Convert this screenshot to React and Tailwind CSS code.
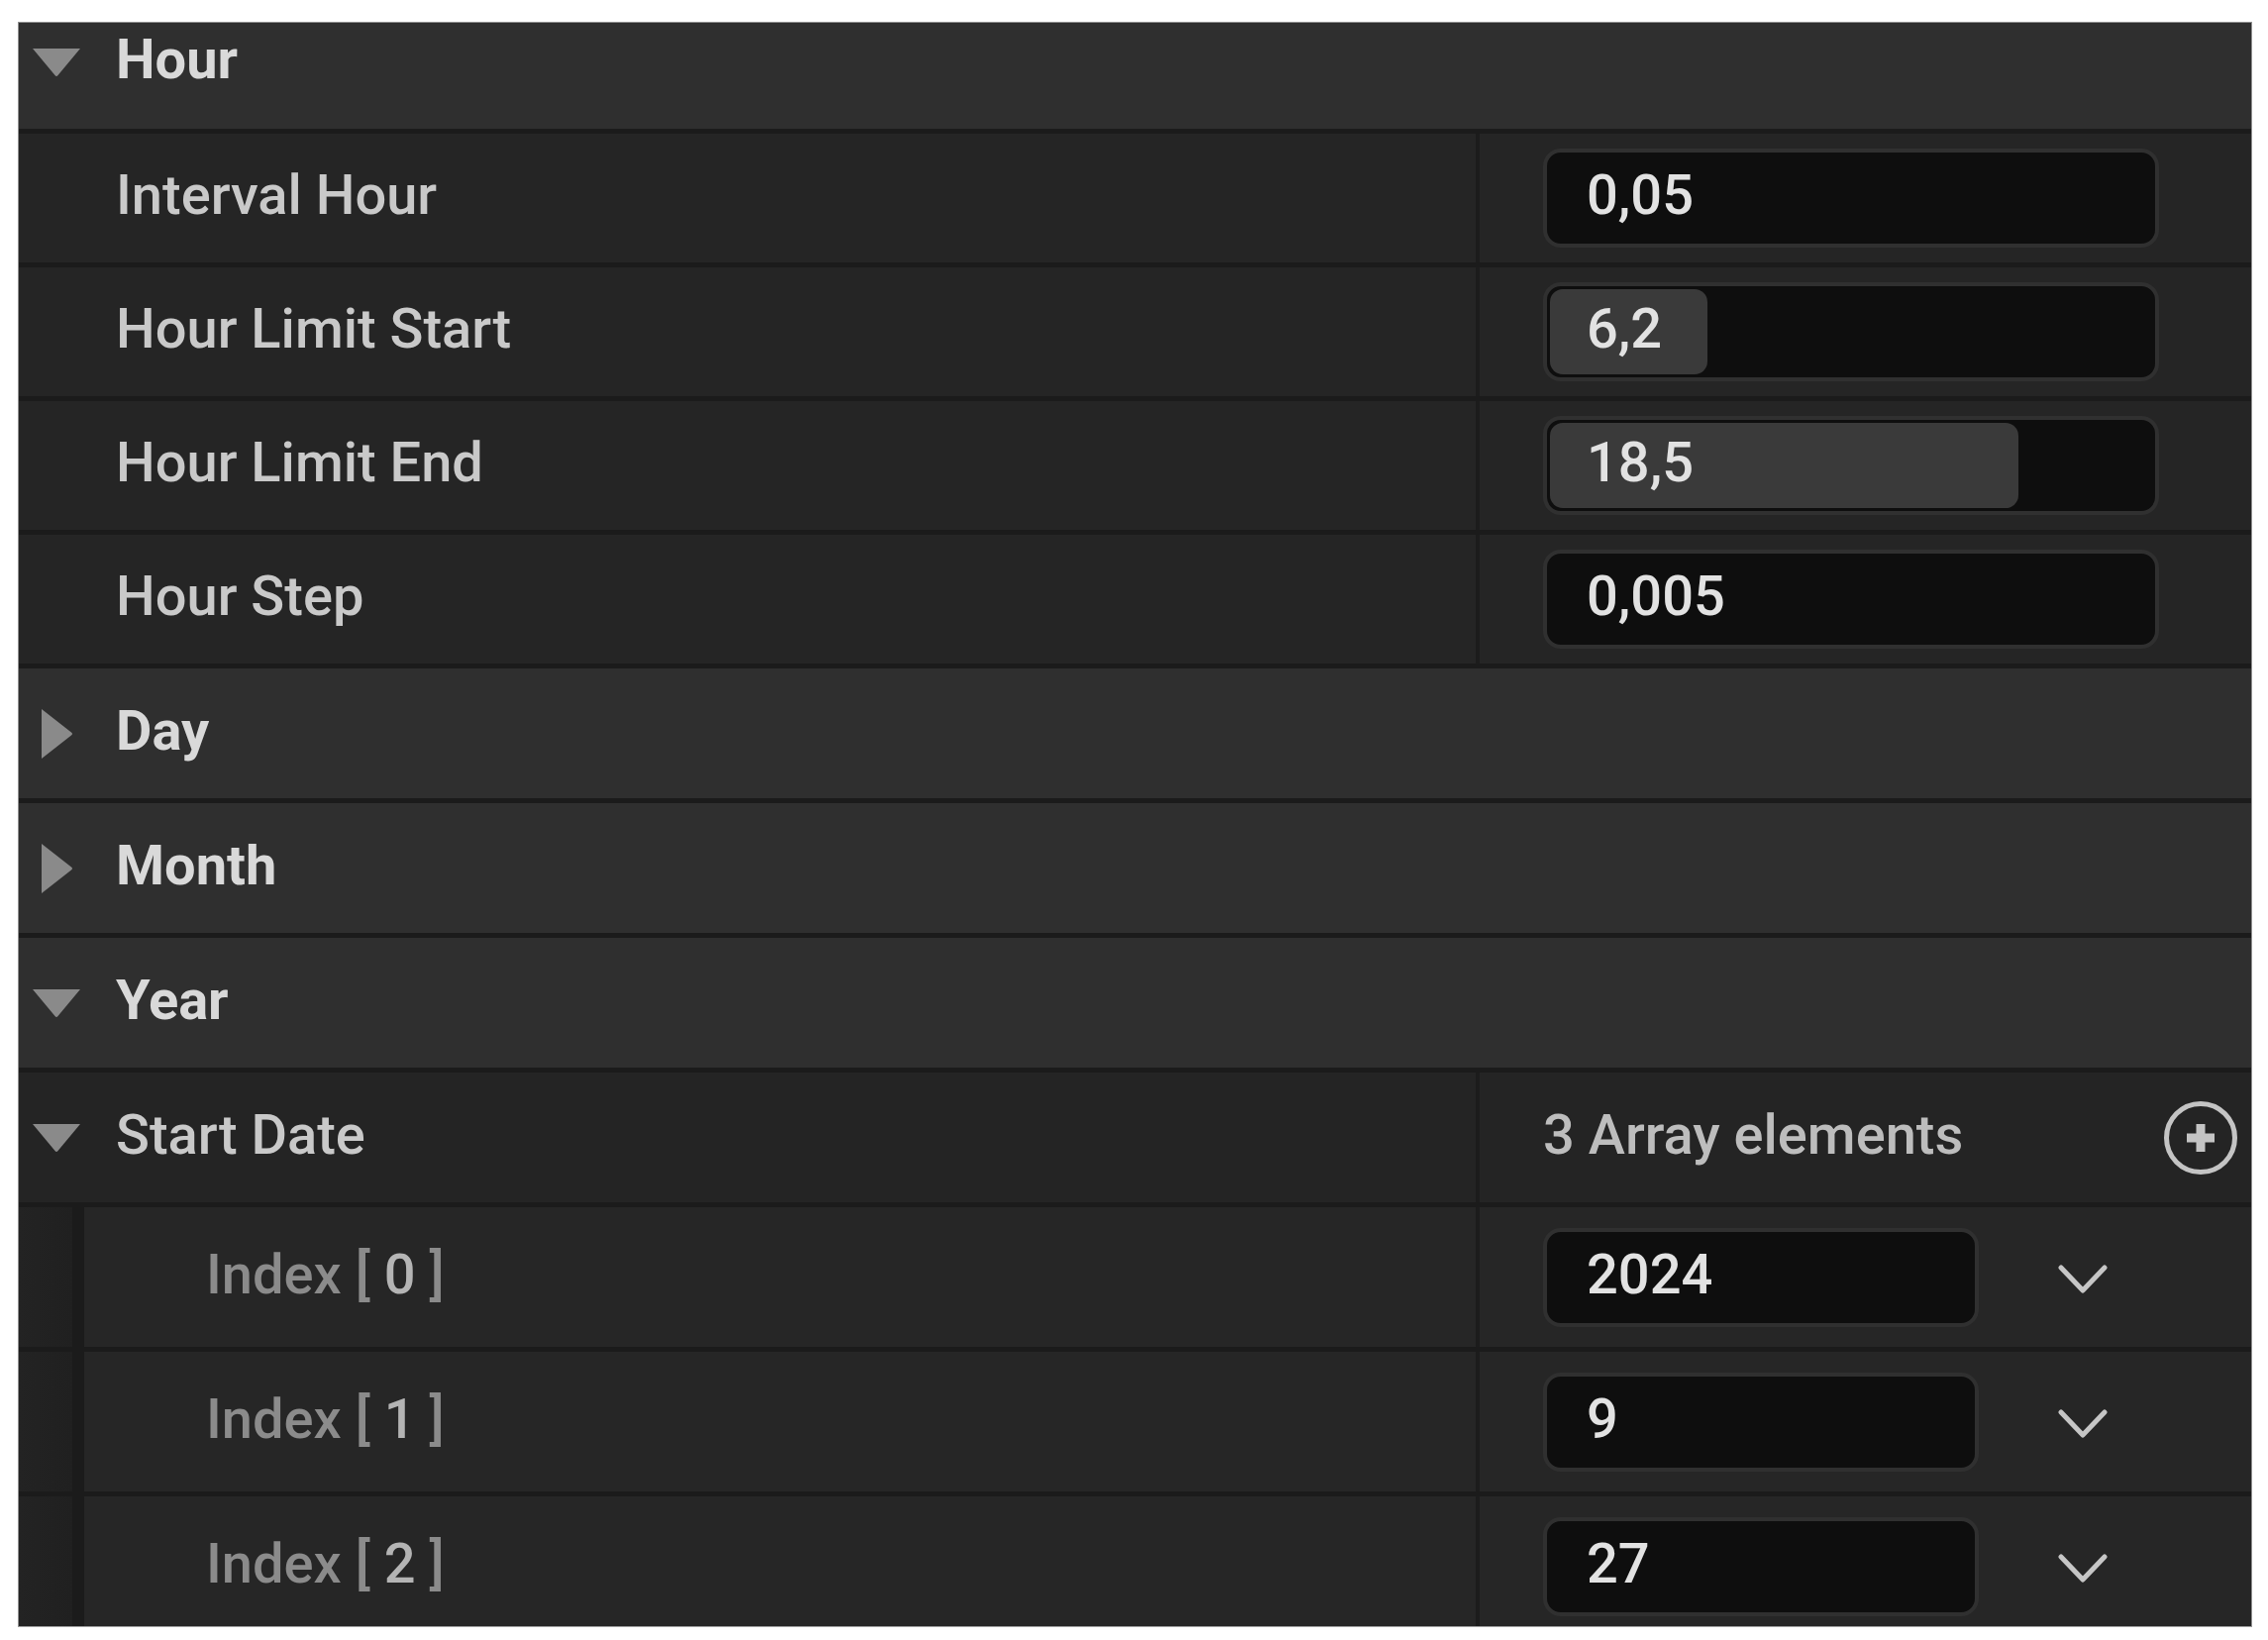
import React from 'react';

const font = { fontFamily: 'Roboto, "Noto Sans", sans-serif' };

const TriDown = () => (
  <svg width="52" height="32" viewBox="0 0 52 32" className="shrink-0">
    <path d="M2 2 L50 2 L27.5 29 Q26 31 24.5 29 Z" fill="#8a8a8a" />
  </svg>
);

const TriRight = () => (
  <svg width="52" height="52" viewBox="0 0 52 52" className="shrink-0">
    <path d="M11 1 L41 24.5 Q43 26 41 27.5 L11 51 Z" fill="#8a8a8a" />
  </svg>
);

const Chevron = () => (
  <svg width="50" height="32" viewBox="0 0 50 32">
    <polyline points="3,4 25,27 47,4" fill="none" stroke="#c6c6c6" strokeWidth="5" strokeLinecap="round" strokeLinejoin="round" />
  </svg>
);

const PlusCircle = () => (
  <svg width="78" height="78" viewBox="0 0 78 78">
    <circle cx="39" cy="39" r="34.5" fill="none" stroke="#c4c4c4" strokeWidth="5" />
    <line x1="39" y1="25" x2="39" y2="53" stroke="#c4c4c4" strokeWidth="9" />
    <line x1="25" y1="39" x2="53" y2="39" stroke="#c4c4c4" strokeWidth="9" />
  </svg>
);

// category header row (Hour / Day / Month / Year)
const Category = ({ label, open, first }) => (
  <div
    className={
      first
        ? 'flex shrink-0 items-center h-[107px] pb-[27px] pl-[12px] bg-[#2f2f2f]'
        : 'flex shrink-0 items-center h-[136px] pl-[12px] bg-[#2f2f2f] border-t-[5px] border-[#1b1b1b]'
    }
  >
    {open ? <TriDown /> : <TriRight />}
    <span className="ml-[34px] -mt-[6px] text-[56px] leading-none font-bold text-[#d9d9d9]">{label}</span>
  </div>
);

const ValueBox = ({ value, fill, w = 'w-[622px]' }) => (
  <div className={`relative ${w} h-[100px] rounded-[18px] border-[4px] border-[#303030] bg-[#0e0e0e] flex items-center pl-[40px]`}>
    {fill != null && (
      <div
        className="absolute left-[3px] top-[3px] bottom-[3px] rounded-[13px] bg-[#3a3a3a]"
        style={{ width: `${fill * 100}%` }}
      />
    )}
    <span className="relative -mt-[6px] text-[56px] leading-none font-medium text-[#e2e2e2]">{value}</span>
  </div>
);

const PropRow = ({ label, value, fill }) => (
  <div className="flex shrink-0 h-[135px] bg-[#252525] border-t-[5px] border-[#1b1b1b]">
    <div className="w-[1471px] flex items-center pl-[98px]">
      <span className="-mt-[6px] text-[56px] leading-none font-medium text-[#c9c9c9]">{label}</span>
    </div>
    <div className="flex-1 flex items-center pl-[64px] border-l-[4px] border-[#1c1c1c]">
      <ValueBox value={value} fill={fill} />
    </div>
  </div>
);

const IndexRow = ({ idx, value }) => (
  <div className="flex h-[146px] shrink-0 bg-[#262626] border-t-[5px] border-[#1b1b1b]">
    <div className="w-[54px] bg-gradient-to-r from-[#232323] to-[#202020]" />
    <div className="w-[12px] bg-[#1b1b1b]" />
    <div className="w-[1405px] flex items-center pl-[123px]">
      <span className="-mt-[6px] text-[56px] leading-none font-medium text-[#8b8b8b]">
        Index [ <span className="text-[#b4b4b4]">{idx}</span> ]
      </span>
    </div>
    <div className="flex-1 flex items-center pl-[64px] border-l-[4px] border-[#1c1c1c]">
      <ValueBox value={value} w="w-[440px]" />
      <div className="ml-[80px] mt-[4px]">
        <Chevron />
      </div>
    </div>
  </div>
);

export default function App() {
  return (
    <div className="w-[2290px] h-[1656px] bg-white pt-[22px] pl-[18px]" style={font}>
      <div className="w-[2256px] h-[1621px] overflow-hidden border border-[#8f8f8f] border-b-[#a0a0a0] bg-[#252525] flex flex-col">
        <Category label="Hour" open first />
        <PropRow label="Interval Hour" value="0,05" />
        <PropRow label="Hour Limit Start" value="6,2" fill={6.2 / 24} />
        <PropRow label="Hour Limit End" value="18,5" fill={18.5 / 24} />
        <PropRow label="Hour Step" value="0,005" />
        <Category label="Day" />
        <Category label="Month" />
        <Category label="Year" open />
        <div className="flex h-[136px] shrink-0 bg-[#242424] border-t-[5px] border-[#1b1b1b]">
          <div className="w-[1471px] flex items-center pl-[12px]">
            <TriDown />
            <span className="ml-[34px] -mt-[6px] text-[56px] leading-none font-medium text-[#c9c9c9]">Start Date</span>
          </div>
          <div className="flex-1 flex items-center justify-between pl-[64px] pr-[12px] border-l-[4px] border-[#1c1c1c]">
            <span className="-mt-[6px] text-[56px] leading-none font-medium text-[#bdbdbd]">3 Array elements</span>
            <PlusCircle />
          </div>
        </div>
        <IndexRow idx="0" value="2024" />
        <IndexRow idx="1" value="9" />
        <IndexRow idx="2" value="27" />
      </div>
    </div>
  );
}
